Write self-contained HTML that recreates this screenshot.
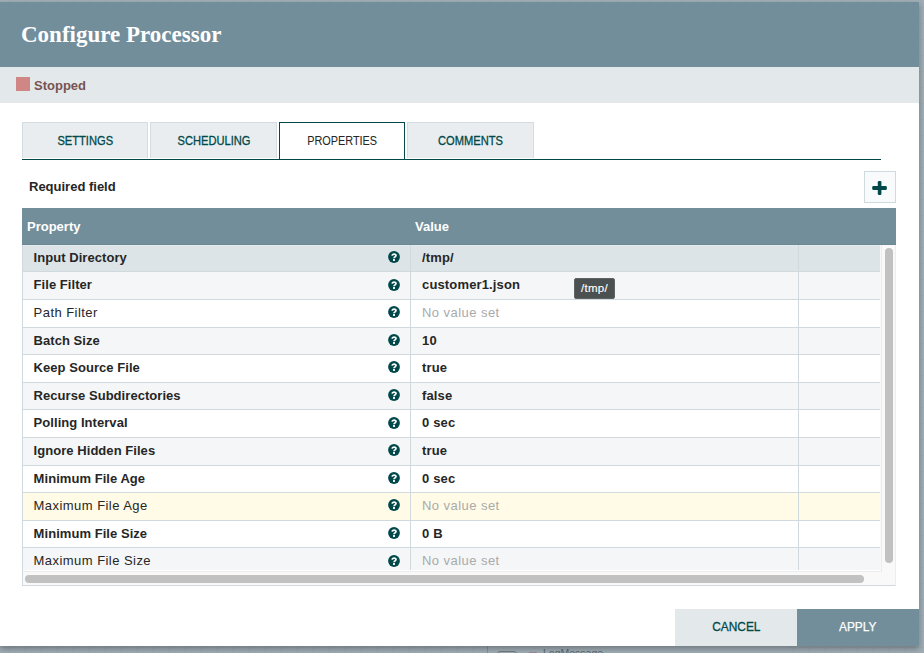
<!DOCTYPE html>
<html><head><meta charset="utf-8">
<style>
*{box-sizing:border-box;margin:0;padding:0}
html,body{width:924px;height:653px;overflow:hidden;background-color:#a1aeb6;background-image:linear-gradient(90deg,#9ba9b1 1px,transparent 1px),linear-gradient(180deg,#9ba9b1 1px,transparent 1px);background-size:16px 16px;background-position:9px 7px;font-family:"Liberation Sans",sans-serif;position:relative}
body>div{position:absolute}
#dlg{left:0;top:2px;width:919px;height:644px;background:#fff;box-shadow:0 3px 6px rgba(0,0,0,.3)}
#hdr{left:0;top:2px;width:919px;height:65px;background:#728e9b}
#title{left:21px;top:22px;font-family:"Liberation Serif",serif;font-weight:bold;font-size:23px;color:#fff;white-space:nowrap}
#status{left:0;top:67px;width:919px;height:36px;background:#e3e8eb}
#sq{left:16px;top:77px;width:14px;height:14px;background:#d18686}
#stxt{left:34px;top:77.5px;font-weight:bold;font-size:13px;color:#775351}
.tab{top:122px;height:36px;background:#e9edf0;border:1px solid #d3dde1;border-bottom:none;font-size:12.5px;color:#004849;text-align:center;line-height:36px;-webkit-text-stroke:0.3px}
.sx{display:inline-block;transform:scaleX(0.89);transform-origin:50% 50%}
.tab.sel{height:37px;line-height:36px;background:#fff;border:1px solid #004849;border-bottom:none;color:#262626;-webkit-text-stroke:0.05px}
.tab.sel .sx{transform:scaleX(0.87)}
#tabline{left:22px;top:159px;width:859px;height:1px;background:#004849}
#req{left:29px;top:179px;font-weight:bold;font-size:13px;color:#262626}
#addbtn{left:864px;top:171px;width:32px;height:32px;border:1px solid #cfdadd;background:#f8fafb}
#addbtn svg{position:absolute;left:-1px;top:-1px}
#tbl{left:22px;top:208px;width:874px;height:378px;border:1px solid #cfd9de;border-right-color:#ededed;background:#f9f9f9}
#thead{left:22px;top:208px;width:874px;height:37px;background:#728e9b;border-bottom:1px solid #6a8793;color:#fff;font-weight:bold;font-size:13px}
#hp{position:absolute;left:5px;top:10.5px}
#hv{position:absolute;left:393px;top:10.5px}
#viewport{left:23px;top:245px;width:857px;height:324.6px;overflow:hidden;background:#fff}
.row{position:absolute;left:0;width:857px;height:27.6px;border-bottom:1px solid #cfd9de;font-size:13px;color:#262626}
.row.odd{background:#f4f6f7}
.row.even{background:#fff}
.row.selrow{background:#dde4e7}
.row.hov{background:#fffbe6}
.c1{position:absolute;left:0;top:0;width:388px;height:100%}
.c2{position:absolute;left:387px;top:0;width:388px;height:100%;border-left:1px solid #cfd9de}
.c3{position:absolute;left:775px;top:0;width:82px;height:100%;border-left:1px solid #cfd9de}
.pname{position:absolute;left:10.6px;top:5px;white-space:nowrap;letter-spacing:0.45px}
.pname.b{letter-spacing:0.05px}
.b{font-weight:bold}
.help{position:absolute;left:365.3px;top:6.2px;width:12px;height:12px}
.help svg{display:block}
.val{position:absolute;left:11px;top:5px;white-space:nowrap;letter-spacing:0.15px}
.val.nv{letter-spacing:0.45px}
.val.nv{color:#aaa}
#vtrack{left:881px;top:245px;width:14px;height:326.8px;background:#f9f9f9;border-left:1px solid #ececec}
#vthumb{position:absolute;left:3px;top:3px;width:8px;height:315px;border-radius:4px;background:#c1c1c1}
#htrack{left:23px;top:572px;width:872px;height:13px;background:#f9f9f9}
#hthumb{position:absolute;left:2px;top:3px;width:839px;height:8px;border-radius:4px;background:#c1c1c1}
#tip{left:574px;top:278px;width:41px;height:21px;background:#4b5051;border:1px solid #5e6364;border-radius:2px;color:#fff;font-size:11.5px;letter-spacing:0.3px;text-align:center;line-height:19px;-webkit-text-stroke:0.15px}
#cancel{left:675px;top:609px;width:122px;height:37px;background:#e3e8eb;color:#004849;font-size:12.5px;text-align:center;line-height:37px;-webkit-text-stroke:0.3px}
#apply{left:797px;top:609px;width:122px;height:37px;background:#728e9b;color:#fff;font-size:12.5px;text-align:center;line-height:37px;-webkit-text-stroke:0.25px}
#canvasnode{left:487px;top:640px;width:300px;height:13px;overflow:hidden;border-left:1px solid #85939b;background:#a1aeb6}
#nodebox{position:absolute;left:9px;top:10.5px;width:20px;height:10px;border:1px solid #6f7c83;border-radius:3px}
#nodetxt{position:absolute;left:55px;top:7px;font-size:10.5px;color:#5d6a71}
#nodered{position:absolute;left:41px;top:11.5px;width:8px;height:4px;background:#a08890}
#cancel .sx,#apply .sx{transform:scaleX(0.95)}

#vpfoot{left:23px;top:569.6px;width:859px;height:2.4px;background:linear-gradient(#fff 0,#fff 1.4px,#ececec 1.4px)}

</style></head><body>
<div id="canvasnode"><div id="nodebox"></div><div id="nodered"></div><div id="nodetxt">LogMessage</div></div>
<div id="dlg"></div>
<div id="hdr"></div><div id="title">Configure Processor</div>
<div id="status"></div><div id="sq"></div><div id="stxt">Stopped</div>
<div class="tab" style="left:22px;width:126px"><span class="sx">SETTINGS</span></div>
<div class="tab" style="left:150px;width:127px"><span class="sx">SCHEDULING</span></div>
<div class="tab sel" style="left:279px;width:126px"><span class="sx">PROPERTIES</span></div>
<div class="tab" style="left:407px;width:127px"><span class="sx">COMMENTS</span></div>
<div id="tabline"></div>
<div id="req">Required field</div>
<div id="addbtn"><svg width="32" height="32" viewBox="0 0 32 32"><g fill="#004849"><rect x="8.25" y="15.1" width="14.55" height="3.9" rx="1.2"/><rect x="13.8" y="10" width="3.6" height="13.9" rx="1.2"/></g></svg></div>
<div id="tbl"></div>
<div id="thead"><span id="hp">Property</span><span id="hv">Value</span></div>
<div id="viewport">
<div class="row even selrow" style="top:0;height:27.35px;box-shadow:inset 0 1px 0 #e4e9ec"><div class="c1"><div class="pname b">Input Directory</div><div class="help"><svg width="12" height="12" viewBox="0 0 12 12"><circle cx="6" cy="6" r="5.9" fill="#004849"/><path d="M4.1 4.6C4.2 2.7 8 2.5 8 4.5C8 5.8 6 5.9 6 7.3" fill="none" stroke="#fff" stroke-width="1.75"/><rect x="5" y="8.1" width="2" height="1.8" fill="#fff"/></svg></div></div><div class="c2"><div class="val b">/tmp/</div></div><div class="c3"></div></div>
<div class="row odd" style="top:27.35px"><div class="c1"><div class="pname b">File Filter</div><div class="help"><svg width="12" height="12" viewBox="0 0 12 12"><circle cx="6" cy="6" r="5.9" fill="#004849"/><path d="M4.1 4.6C4.2 2.7 8 2.5 8 4.5C8 5.8 6 5.9 6 7.3" fill="none" stroke="#fff" stroke-width="1.75"/><rect x="5" y="8.1" width="2" height="1.8" fill="#fff"/></svg></div></div><div class="c2"><div class="val b">customer1.json</div></div><div class="c3"></div></div>
<div class="row even" style="top:54.95px"><div class="c1"><div class="pname">Path Filter</div><div class="help"><svg width="12" height="12" viewBox="0 0 12 12"><circle cx="6" cy="6" r="5.9" fill="#004849"/><path d="M4.1 4.6C4.2 2.7 8 2.5 8 4.5C8 5.8 6 5.9 6 7.3" fill="none" stroke="#fff" stroke-width="1.75"/><rect x="5" y="8.1" width="2" height="1.8" fill="#fff"/></svg></div></div><div class="c2"><div class="val nv">No value set</div></div><div class="c3"></div></div>
<div class="row odd" style="top:82.55px"><div class="c1"><div class="pname b">Batch Size</div><div class="help"><svg width="12" height="12" viewBox="0 0 12 12"><circle cx="6" cy="6" r="5.9" fill="#004849"/><path d="M4.1 4.6C4.2 2.7 8 2.5 8 4.5C8 5.8 6 5.9 6 7.3" fill="none" stroke="#fff" stroke-width="1.75"/><rect x="5" y="8.1" width="2" height="1.8" fill="#fff"/></svg></div></div><div class="c2"><div class="val b">10</div></div><div class="c3"></div></div>
<div class="row even" style="top:110.15px"><div class="c1"><div class="pname b">Keep Source File</div><div class="help"><svg width="12" height="12" viewBox="0 0 12 12"><circle cx="6" cy="6" r="5.9" fill="#004849"/><path d="M4.1 4.6C4.2 2.7 8 2.5 8 4.5C8 5.8 6 5.9 6 7.3" fill="none" stroke="#fff" stroke-width="1.75"/><rect x="5" y="8.1" width="2" height="1.8" fill="#fff"/></svg></div></div><div class="c2"><div class="val b">true</div></div><div class="c3"></div></div>
<div class="row odd" style="top:137.75px"><div class="c1"><div class="pname b">Recurse Subdirectories</div><div class="help"><svg width="12" height="12" viewBox="0 0 12 12"><circle cx="6" cy="6" r="5.9" fill="#004849"/><path d="M4.1 4.6C4.2 2.7 8 2.5 8 4.5C8 5.8 6 5.9 6 7.3" fill="none" stroke="#fff" stroke-width="1.75"/><rect x="5" y="8.1" width="2" height="1.8" fill="#fff"/></svg></div></div><div class="c2"><div class="val b">false</div></div><div class="c3"></div></div>
<div class="row even" style="top:165.35px"><div class="c1"><div class="pname b">Polling Interval</div><div class="help"><svg width="12" height="12" viewBox="0 0 12 12"><circle cx="6" cy="6" r="5.9" fill="#004849"/><path d="M4.1 4.6C4.2 2.7 8 2.5 8 4.5C8 5.8 6 5.9 6 7.3" fill="none" stroke="#fff" stroke-width="1.75"/><rect x="5" y="8.1" width="2" height="1.8" fill="#fff"/></svg></div></div><div class="c2"><div class="val b">0 sec</div></div><div class="c3"></div></div>
<div class="row odd" style="top:192.95px"><div class="c1"><div class="pname b">Ignore Hidden Files</div><div class="help"><svg width="12" height="12" viewBox="0 0 12 12"><circle cx="6" cy="6" r="5.9" fill="#004849"/><path d="M4.1 4.6C4.2 2.7 8 2.5 8 4.5C8 5.8 6 5.9 6 7.3" fill="none" stroke="#fff" stroke-width="1.75"/><rect x="5" y="8.1" width="2" height="1.8" fill="#fff"/></svg></div></div><div class="c2"><div class="val b">true</div></div><div class="c3"></div></div>
<div class="row even" style="top:220.55px"><div class="c1"><div class="pname b">Minimum File Age</div><div class="help"><svg width="12" height="12" viewBox="0 0 12 12"><circle cx="6" cy="6" r="5.9" fill="#004849"/><path d="M4.1 4.6C4.2 2.7 8 2.5 8 4.5C8 5.8 6 5.9 6 7.3" fill="none" stroke="#fff" stroke-width="1.75"/><rect x="5" y="8.1" width="2" height="1.8" fill="#fff"/></svg></div></div><div class="c2"><div class="val b">0 sec</div></div><div class="c3"></div></div>
<div class="row odd hov" style="top:248.15px"><div class="c1"><div class="pname">Maximum File Age</div><div class="help"><svg width="12" height="12" viewBox="0 0 12 12"><circle cx="6" cy="6" r="5.9" fill="#004849"/><path d="M4.1 4.6C4.2 2.7 8 2.5 8 4.5C8 5.8 6 5.9 6 7.3" fill="none" stroke="#fff" stroke-width="1.75"/><rect x="5" y="8.1" width="2" height="1.8" fill="#fff"/></svg></div></div><div class="c2"><div class="val nv">No value set</div></div><div class="c3"></div></div>
<div class="row even" style="top:275.75px"><div class="c1"><div class="pname b">Minimum File Size</div><div class="help"><svg width="12" height="12" viewBox="0 0 12 12"><circle cx="6" cy="6" r="5.9" fill="#004849"/><path d="M4.1 4.6C4.2 2.7 8 2.5 8 4.5C8 5.8 6 5.9 6 7.3" fill="none" stroke="#fff" stroke-width="1.75"/><rect x="5" y="8.1" width="2" height="1.8" fill="#fff"/></svg></div></div><div class="c2"><div class="val b">0 B</div></div><div class="c3"></div></div>
<div class="row odd" style="top:303.35px"><div class="c1"><div class="pname">Maximum File Size</div><div class="help"><svg width="12" height="12" viewBox="0 0 12 12"><circle cx="6" cy="6" r="5.9" fill="#004849"/><path d="M4.1 4.6C4.2 2.7 8 2.5 8 4.5C8 5.8 6 5.9 6 7.3" fill="none" stroke="#fff" stroke-width="1.75"/><rect x="5" y="8.1" width="2" height="1.8" fill="#fff"/></svg></div></div><div class="c2"><div class="val nv">No value set</div></div><div class="c3"></div></div>
</div>
<div id="vpfoot"></div>
<div id="vtrack"><div id="vthumb"></div></div>
<div id="htrack"><div id="hthumb"></div></div>
<div id="tip">/tmp/</div>
<div id="cancel"><span class="sx">CANCEL</span></div>
<div id="apply"><span class="sx">APPLY</span></div>
</body></html>
